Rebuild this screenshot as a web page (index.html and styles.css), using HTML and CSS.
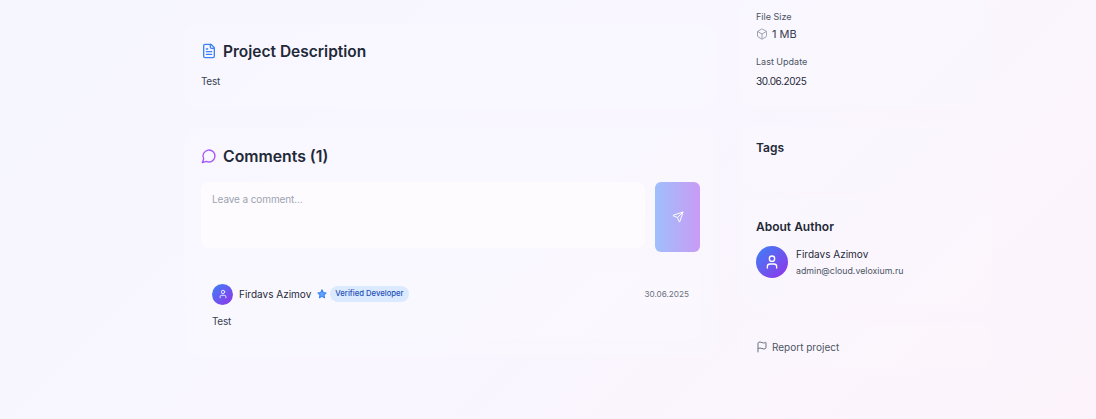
FILE: index.html
```html
<!DOCTYPE html>
<html lang="en">

<head>
    <meta charset="UTF-8">
    <meta name="viewport" content="width=device-width, initial-scale=1.0">
    <title>Project details</title>
    <link rel="stylesheet" href="styles.css">
</head>

<body>
    <div class="layout">
        <!-- Main column -->
        <main class="main-col">
            <section class="card card-desc">
                <h2 class="card-title">
                    <svg class="title-icon" width="16" height="16" viewBox="0 0 24 24" fill="none" stroke="#3b82f6" stroke-width="2" stroke-linecap="round" stroke-linejoin="round">
                        <path d="M15 2H6a2 2 0 0 0-2 2v16a2 2 0 0 0 2 2h12a2 2 0 0 0 2-2V7z"/>
                        <path d="M14 2v4a2 2 0 0 0 2 2h4"/>
                        <path d="M8 13h8"/>
                        <path d="M8 17h8"/>
                        <path d="M8 9h2"/>
                    </svg>
                    Project Description
                </h2>
                <p class="body-text">Test</p>
            </section>

            <section class="card card-comments">
                <h2 class="card-title">
                    <svg class="title-icon" width="16" height="16" viewBox="0 0 24 24" fill="none" stroke="#a855f7" stroke-width="2" stroke-linecap="round" stroke-linejoin="round">
                        <path d="M7.900 20A9 9 0 1 0 4 16.100L2 22z"/>
                    </svg>
                    Comments (1)
                </h2>
                <div class="comment-form">
                    <div class="comment-input">Leave a comment...</div>
                    <button class="send-btn" type="button">
                        <svg width="12" height="12" viewBox="0 0 24 24" fill="none" stroke="#fff" stroke-width="2" stroke-linecap="round" stroke-linejoin="round">
                            <path d="M14.500 21.700a.5.5 0 0 0 .9 0l6.500-19a.5.5 0 0 0-.6-.6l-19 6.500a.5.5 0 0 0 0 .9l7.900 3.200a2 2 0 0 1 1.100 1.100z"/>
                            <path d="m21.850 2.150-10.900 10.900"/>
                        </svg>
                    </button>
                </div>
                <div class="comment">
                    <div class="comment-head">
                        <div class="avatar avatar-sm">
                            <svg width="10" height="10" viewBox="0 0 24 24" fill="none" stroke="#fff" stroke-width="2" stroke-linecap="round" stroke-linejoin="round">
                                <path d="M19 21v-2a4 4 0 0 0-4-4H9a4 4 0 0 0-4 4v2"/>
                                <circle cx="12" cy="7" r="4"/>
                            </svg>
                        </div>
                        <span class="comment-name">Firdavs Azimov</span>
                        <svg class="star" width="10" height="10" viewBox="0 0 24 24" fill="#60a5fa" stroke="#3b82f6" stroke-width="2.500" stroke-linejoin="round">
                            <path d="M12 2l3 6.500 7 .9-5.100 4.800 1.300 7L12 17.800 5.800 21.200l1.300-7L2 9.400l7-.9z"/>
                        </svg>
                        <span class="badge">Verified Developer</span>
                        <span class="comment-date">30.06.2025</span>
                    </div>
                    <p class="body-text">Test</p>
                </div>
            </section>
        </main>

        <!-- Sidebar -->
        <aside class="side-col">
            <section class="card side-info">
                <div class="info-label">File Size</div>
                <div class="info-value">
                    <svg width="12" height="12" viewBox="0 0 24 24" fill="none" stroke="#9ca3af" stroke-width="2" stroke-linecap="round" stroke-linejoin="round">
                        <path d="M21 8a2 2 0 0 0-1-1.730l-7-4a2 2 0 0 0-2 0l-7 4A2 2 0 0 0 3 8v8a2 2 0 0 0 1 1.730l7 4a2 2 0 0 0 2 0l7-4A2 2 0 0 0 21 16z"/>
                        <path d="m3.300 7 8.700 5 8.700-5"/>
                        <path d="M12 22V12"/>
                    </svg>
                    <span>1 MB</span>
                </div>
                <div class="info-label info-label-next">Last Update</div>
                <div class="info-value info-date">30.06.2025</div>
            </section>

            <section class="card side-tags">
                <h3 class="side-title">Tags</h3>
            </section>

            <section class="card side-author">
                <h3 class="side-title">About Author</h3>
                <div class="author">
                    <div class="avatar avatar-lg">
                        <svg width="16" height="16" viewBox="0 0 24 24" fill="none" stroke="#fff" stroke-width="2" stroke-linecap="round" stroke-linejoin="round">
                            <path d="M19 21v-2a4 4 0 0 0-4-4H9a4 4 0 0 0-4 4v2"/>
                            <circle cx="12" cy="7" r="4"/>
                        </svg>
                    </div>
                    <div>
                        <div class="author-name">Firdavs Azimov</div>
                        <div class="author-mail">admin@cloud.veloxium.ru</div>
                    </div>
                </div>
            </section>

            <section class="card side-report">
                <svg width="12" height="12" viewBox="0 0 24 24" fill="none" stroke="#6b7280" stroke-width="2" stroke-linecap="round" stroke-linejoin="round">
                    <path d="M4 22V4a1 1 0 0 1 .4-.8A6 6 0 0 1 8 2c3 0 5 2 7.300 2a6 6 0 0 0 4-1.300 1 1 0 0 1 .7.800v10a1 1 0 0 1-.4.8A6 6 0 0 1 16 16c-3 0-5-2-8-2a6 6 0 0 0-4 1.500"/>
                </svg>
                <span>Report project</span>
            </section>
        </aside>
    </div>
</body>

</html>
```

FILE: styles.css
```css
/* Base */
html, body {
    height: 100%;
}

body {
    margin: 0;
    overflow: hidden;
    font-family: Inter, 'Noto Sans', sans-serif;
    color: #1f2937;
    background: linear-gradient(135deg, #f6f6ff 0%, #f9f6ff 50%, #fdf4fb 100%);
}

/* Columns */
.layout {
    display: flex;
    gap: 25px;
    width: 805px;
    margin-left: 185px;
}

.main-col {
    display: flex;
    flex-direction: column;
    gap: 20px;
    width: 530px;
    padding-top: 25px;
}

.side-col {
    display: flex;
    flex-direction: column;
    gap: 20px;
    width: 250px;
}

/* Glass cards */
.card {
    box-sizing: border-box;
    border-radius: 12px;
    background: rgba(255, 255, 255, 0.13);
    box-shadow: 0 0 6px rgba(255, 255, 255, 0.25);
}

.card-desc {
    height: 83px;
    padding: 16px 16px 0;
}

.card-comments {
    height: 227px;
    padding: 18px 15px 16px 16px;
}

.card-title {
    display: flex;
    align-items: center;
    gap: 6px;
    margin: 0;
    height: 22px;
    font-size: 15.500px;
    font-weight: 600;
    line-height: 22px;
    color: #1f2937;
}

.card-comments .card-title {
    font-size: 15.800px;
}

.title-icon {
    margin-top: -2px;
}

.body-text {
    margin: 0;
    font-size: 10px;
    line-height: 16px;
    letter-spacing: -0.3px;
    color: #374151;
}

.card-desc .body-text {
    margin-top: 10px;
}

/* Comment form */
.comment-form {
    display: flex;
    gap: 10px;
    margin-top: 14px;
}

.comment-input {
    box-sizing: border-box;
    flex-shrink: 0;
    width: 444px;
    height: 66px;
    padding: 9px 11px;
    border-radius: 8px;
    background: #fefbff;
    font-size: 10px;
    line-height: 16px;
    letter-spacing: -0.1px;
    color: #9ca3af;
}

.send-btn {
    display: flex;
    align-items: center;
    justify-content: center;
    flex-shrink: 0;
    width: 45px;
    height: 70px;
    padding: 0;
    border: none;
    border-radius: 6px;
    background: linear-gradient(90deg, #9fbffb, #c99bf5);
}

/* Comment item */
.comment {
    box-sizing: border-box;
    height: 66px;
    margin-top: 20px;
    padding: 11px 11px;
    border-radius: 8px;
    background: rgba(255, 255, 255, 0.2);
}

.comment-head {
    display: flex;
    align-items: center;
    height: 22px;
}

.comment-head + .body-text {
    margin-top: 8px;
}

.avatar {
    display: flex;
    align-items: center;
    justify-content: center;
    flex-shrink: 0;
    border-radius: 50%;
    background: linear-gradient(135deg, #3b82f6, #9333ea);
}

.avatar-sm {
    width: 21px;
    height: 21px;
}

.avatar-lg {
    width: 32px;
    height: 32px;
}

.comment-name {
    margin-left: 6px;
    font-size: 10px;
    font-weight: 400;
    color: #1f2937;
}

.star {
    margin-left: 6px;
}

.badge {
    margin-left: 3px;
    padding: 0 5px;
    border-radius: 8px;
    background: #dbeafe;
    font-size: 7.700px;
    font-weight: 500;
    line-height: 16px;
    color: #2550b8;
}

.comment-date {
    margin-left: auto;
    font-size: 8.200px;
    color: #6b7280;
}

/* Sidebar */
.side-info {
    height: 107px;
    padding: 11px 16px 0;
}

.info-label {
    font-size: 9px;
    line-height: 12px;
    color: #4b5563;
}

.info-label-next {
    margin-top: 14px;
}

.info-value {
    display: flex;
    align-items: center;
    gap: 4px;
    height: 16px;
    margin-top: 3px;
    font-size: 11px;
    font-weight: 400;
    color: #374151;
}

.info-date {
    margin-top: 5px;
    font-size: 10px;
    letter-spacing: -0.4px;
    color: #1f2937;
}

.side-tags {
    height: 63px;
    padding: 12px 16px;
}

.side-title {
    margin: 0;
    font-size: 12px;
    font-weight: 600;
    line-height: 18px;
    color: #1f2937;
}

.side-author {
    height: 107px;
    margin-top: -12px;
    padding: 20px 16px 0;
}

.author {
    display: flex;
    align-items: center;
    gap: 8px;
    margin-top: 10px;
}

.author-name {
    margin-top: -1px;
    font-size: 10px;
    font-weight: 400;
    line-height: 14px;
    color: #1f2937;
}

.author-mail {
    margin-top: 4px;
    font-size: 8.800px;
    line-height: 12px;
    color: #4b5563;
}

.side-report {
    display: flex;
    align-items: center;
    gap: 4px;
    height: 43px;
    padding: 0 16px;
    font-size: 10px;
    color: #4b5563;
}
```
